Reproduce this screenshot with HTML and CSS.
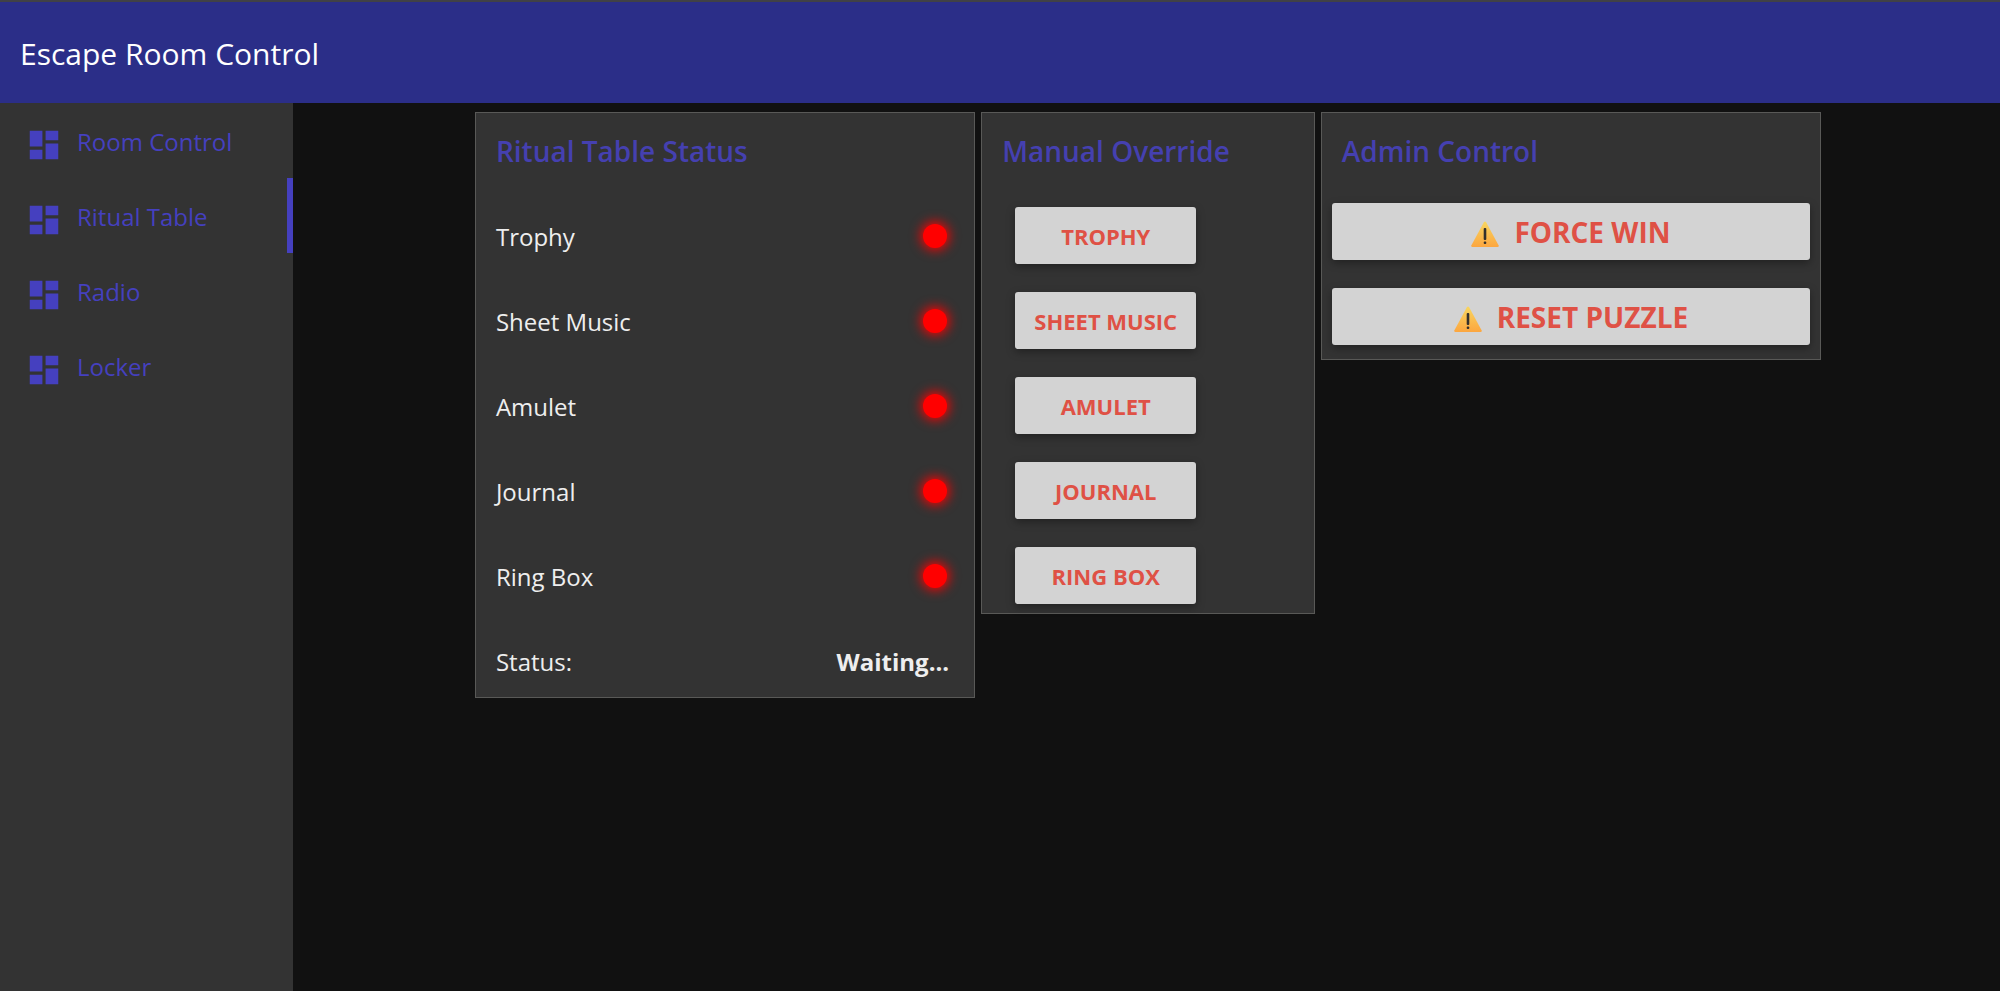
FILE: index.html
```html
<!DOCTYPE html>
<html lang="en">
<head>
<meta charset="utf-8">
<title>Escape Room Control</title>
<link rel="stylesheet" href="styles.css">
</head>
<body>
<svg class="defs" aria-hidden="true">
  <defs>
    <linearGradient id="amber" x1="0" y1="0" x2="0" y2="1">
      <stop offset="0" stop-color="#f8d660"/>
      <stop offset="1" stop-color="#fca63f"/>
    </linearGradient>
    <symbol id="dashboard" viewBox="0 0 24 24"><path d="M3 13h8V3H3v10zm0 8h8v-6H3v6zm10 0h8V11h-8v10zm0-18v6h8V3h-8z"/></symbol>
    <symbol id="warning" viewBox="0 0 28 26">
      <path d="M13 .9Q14 0 15 .9L27.700 24.500Q28 26 26.500 26H1.500Q0 26 .3 24.500Z" fill="url(#amber)"/>
      <rect x="12.700" y="7" width="2.600" height="12" rx="1" fill="#33302c"/>
      <rect x="12.700" y="20.500" width="2.600" height="2.500" rx="1" fill="#33302c"/>
    </symbol>
  </defs>
</svg>
<header class="topbar"><h1 class="brand">Escape Room Control</h1></header>
<div class="layout">
  <nav class="sidebar" aria-label="Rooms">
    <a class="nav-link" href="#room"><svg class="nav-icon" aria-hidden="true"><use href="#dashboard"/></svg><span class="nav-text">Room Control</span></a>
    <a class="nav-link active" href="#ritual" aria-current="page"><svg class="nav-icon" aria-hidden="true"><use href="#dashboard"/></svg><span class="nav-text">Ritual Table</span></a>
    <a class="nav-link" href="#radio"><svg class="nav-icon" aria-hidden="true"><use href="#dashboard"/></svg><span class="nav-text">Radio</span></a>
    <a class="nav-link" href="#locker"><svg class="nav-icon" aria-hidden="true"><use href="#dashboard"/></svg><span class="nav-text">Locker</span></a>
  </nav>
  <main class="content">
    <div class="panels">
      <section class="panel">
        <h2 class="panel-title">Ritual Table Status</h2>
        <ul class="status-list">
          <li class="status-row">Trophy<span class="led" role="img" aria-label="Off"></span></li>
          <li class="status-row">Sheet Music<span class="led" role="img" aria-label="Off"></span></li>
          <li class="status-row">Amulet<span class="led" role="img" aria-label="Off"></span></li>
          <li class="status-row">Journal<span class="led" role="img" aria-label="Off"></span></li>
          <li class="status-row">Ring Box<span class="led" role="img" aria-label="Off"></span></li>
          <li class="status-row">Status:<strong class="status-value">Waiting...</strong></li>
        </ul>
      </section>
      <section class="panel">
        <h2 class="panel-title">Manual Override</h2>
        <div class="actions override">
          <button class="btn" type="button">TROPHY</button>
          <button class="btn" type="button">SHEET MUSIC</button>
          <button class="btn" type="button">AMULET</button>
          <button class="btn" type="button">JOURNAL</button>
          <button class="btn" type="button">RING BOX</button>
        </div>
      </section>
      <section class="panel">
        <h2 class="panel-title">Admin Control</h2>
        <div class="actions admin">
          <button class="btn btn-large" type="button"><svg class="warn-icon" aria-hidden="true"><use href="#warning"/></svg>FORCE WIN</button>
          <button class="btn btn-large" type="button"><svg class="warn-icon" aria-hidden="true"><use href="#warning"/></svg>RESET PUZZLE</button>
        </div>
      </section>
    </div>
  </main>
</div>
</body>
</html>
```
FILE: styles.css
```css
* {
  box-sizing: border-box;
}

body {
  margin: 0;
  min-height: 100vh;
  display: flex;
  flex-direction: column;
  background: #111111;
  color: #eeeeee;
  font-family: "Open Sans", "Noto Sans", sans-serif;
  font-size: 24px;
  line-height: 32px;
}

.defs {
  position: absolute;
  width: 0;
  height: 0;
}

.topbar {
  display: flex;
  align-items: center;
  height: 103px;
  padding: 2px 20px 0;
  border-top: 2px solid #414146;
  background: #2b2e88;
}

.brand {
  margin: 0;
  color: #ffffff;
  font-size: 30px;
  font-weight: 400;
  line-height: 40px;
}

.layout {
  display: flex;
  flex: 1;
}

.sidebar {
  flex: none;
  width: 293px;
  background: #333333;
}

.nav-link {
  display: flex;
  gap: 14px;
  height: 75px;
  padding: 23px 0 0 25px;
  border-right: 6px solid transparent;
  color: #4540bf;
  text-decoration: none;
}

.nav-link.active {
  border-right-color: #4540bf;
}

.nav-icon {
  flex: none;
  width: 38px;
  height: 38px;
  fill: currentColor;
}

.content {
  flex: 1;
  padding: 9px 0 9px 3px;
}

.panels {
  display: grid;
  grid-template-columns: 3fr 2fr 3fr;
  align-items: start;
  gap: 6px;
  width: 79%;
  margin: 0 auto;
}

.panel {
  border: 1px solid #595957;
  background: #333333;
}

.panel-title {
  margin: 0;
  padding: 18px 20px 23px;
  color: #4540b0;
  font-size: 28px;
  font-weight: 600;
  line-height: 40px;
}

.status-list {
  display: grid;
  gap: 29px;
  margin: 0;
  padding: 15px 25px 7px 20px;
  list-style: none;
}

.status-row {
  display: flex;
  align-items: center;
  justify-content: space-between;
  height: 56px;
}

.led {
  width: 24px;
  height: 24px;
  margin: 0 2px 2px 0;
  border-radius: 50%;
  background: #ff0000;
  box-shadow: 0 0 12px 2px #ff0000;
}

.status-value {
  font-weight: 700;
}

.actions {
  display: grid;
  gap: 28px;
}

.override {
  width: 214px;
  padding: 13px 0 9px 33px;
}

.admin {
  padding: 9px 10px 14px;
}

.btn {
  display: flex;
  align-items: center;
  justify-content: center;
  height: 57px;
  padding: 0;
  border: 0;
  border-radius: 3px;
  background: #d3d3d3;
  box-shadow: 0 3px 8px rgba(0, 0, 0, 0.35);
  color: #df5145;
  font: inherit;
  font-size: 22px;
  font-weight: 700;
}

.btn-large {
  gap: 15px;
  font-size: 28px;
}

.warn-icon {
  width: 28px;
  height: 26px;
  margin-top: 4px;
}
```
